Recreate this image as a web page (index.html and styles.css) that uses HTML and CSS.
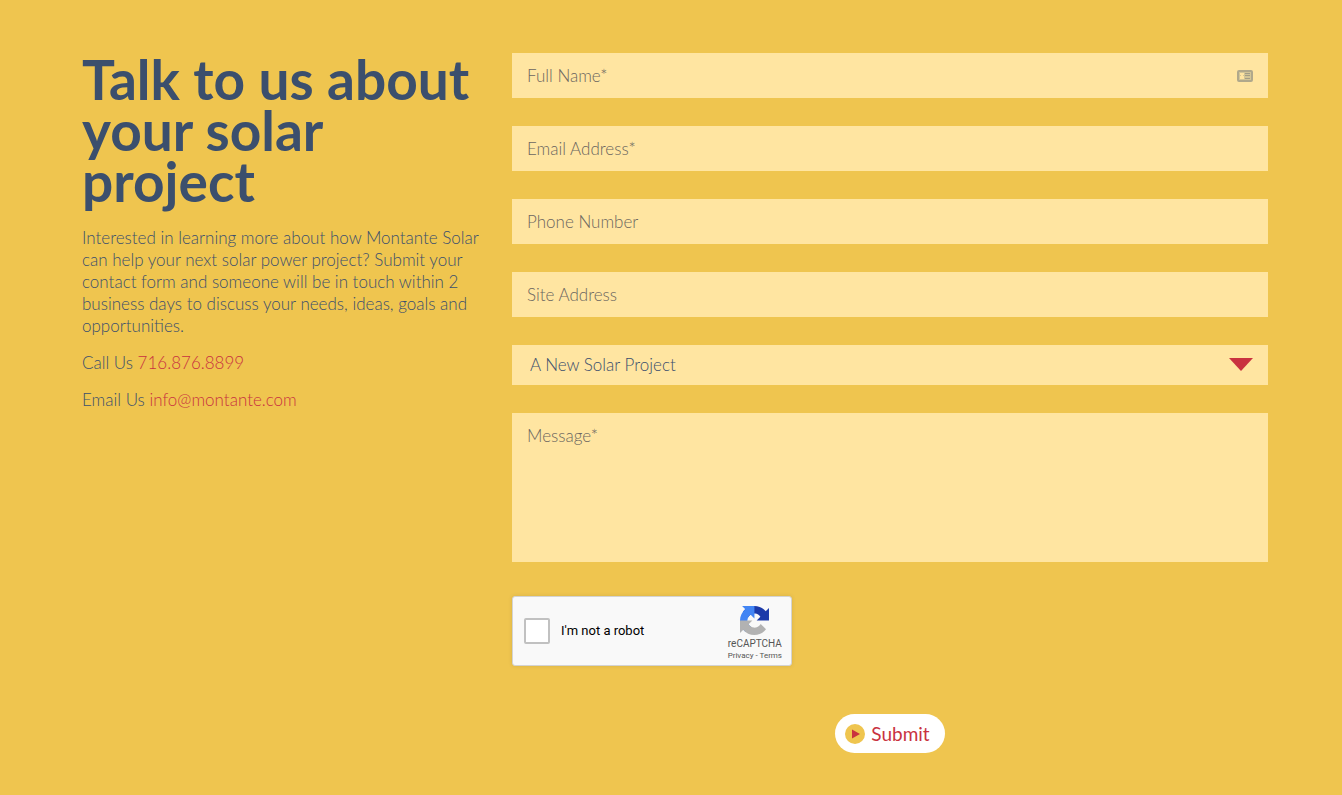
FILE: index.html
```
<!DOCTYPE html>
<html lang="en">
  <head>
    <meta charset="UTF-8" />
    <meta name="viewport" content="width=device-width, initial-scale=1.0" />
    <title>Contact Montante Solar</title>
    <link rel="stylesheet" href="styles.css">
  </head>
  <body>
    <main class="contact">
      <section class="intro">
        <h1>Talk to us about your solar project</h1>
        <p>
          Interested in learning more about how Montante Solar can help your
          next solar power project? Submit your contact form and someone will
          be in touch within 2 business days to discuss your needs, ideas,
          goals and opportunities.
        </p>
        <p>Call Us <a href="tel:7168768899">716.876.8899</a></p>
        <p>Email Us <a href="mailto:info@montante.com">info@montante.com</a></p>
      </section>

      <form class="contact-form">
        <div class="field-wrap">
          <input class="field" type="text" name="name" placeholder="Full Name*" aria-label="Full Name" />
          <svg class="card-icon" width="16" height="14" viewBox="0 0 16 14" aria-hidden="true">
            <rect x="1" y="2" width="14" height="10" rx="1" fill="#d2c596" stroke="#b0a88b" stroke-width="2" />
            <path d="M3 4h4v2H6v1h1v3H3V7h1V6H3z" fill="#ffe5a1" />
            <path d="M8 4h5v1H8zM8 6h5v1H8zM8 9h5v1H8z" fill="#a39d85" />
          </svg>
        </div>
        <input class="field" type="email" name="email" placeholder="Email Address*" aria-label="Email Address" />
        <input class="field" type="tel" name="phone" placeholder="Phone Number" aria-label="Phone Number" />
        <input class="field" type="text" name="site" placeholder="Site Address" aria-label="Site Address" />
        <div class="field-wrap">
          <select class="field field-select" name="project" aria-label="Project type">
            <option>A New Solar Project</option>
          </select>
          <svg class="arrow-icon" width="24" height="13" viewBox="0 0 24 13" aria-hidden="true">
            <path d="M0 0h24L12 13z" fill="#c9323f" />
          </svg>
        </div>
        <textarea class="field field-message" name="message" placeholder="Message*" aria-label="Message"></textarea>

        <div class="captcha">
          <input type="checkbox" id="robot" />
          <label for="robot">I'm not a robot</label>
          <div class="captcha-brand">
            <svg width="29" height="29" viewBox="0 0 64 64" aria-hidden="true">
              <path d="M64 31.955l-.033-1.370V4.687l-7.160 7.160C50.948 4.674 42.033.093 32.050.093c-10.400 0-19.622 4.960-25.458 12.640l11.736 11.860a15.550 15.550 0 0 1 4.754-5.334c2.050-1.600 4.952-2.906 8.968-2.906.485 0 .860.057 1.135.163 4.976.393 9.288 3.140 11.828 7.124l-8.307 8.307z" fill="#1c3aa9" />
              <path d="M31.862.094l-1.370.033H4.594l7.160 7.160C4.580 13.147 0 22.060 0 32.046c0 10.400 4.960 19.622 12.640 25.458L24.500 45.768a15.550 15.550 0 0 1-5.334-4.754c-1.600-2.050-2.906-4.952-2.906-8.968 0-.485.057-.860.163-1.135.393-4.976 3.140-9.288 7.124-11.828l8.307 8.307z" fill="#4285f4" />
              <path d="M0 32.140l.033 1.370v25.900l7.160-7.160C13.053 59.423 21.967 64 31.953 64c10.400 0 19.622-4.960 25.458-12.640L45.675 39.500a15.550 15.550 0 0 1-4.754 5.334c-2.050 1.600-4.952 2.906-8.968 2.906-.485 0-.860-.057-1.135-.163-4.976-.393-9.288-3.140-11.828-7.124l8.307-8.307z" fill="#b2b2b2" />
            </svg>
            <span class="captcha-name">reCAPTCHA</span>
            <span class="captcha-links"><a href="#">Privacy</a> - <a href="#">Terms</a></span>
          </div>
        </div>

        <button class="submit-button" type="submit">
          <svg width="20" height="20" viewBox="0 0 20 20" aria-hidden="true">
            <circle cx="10" cy="10" r="10" fill="#efc54f" />
            <path d="M7 5.500l8 4.500-8 4.500z" fill="#c9323f" />
          </svg>
          Submit
        </button>
      </form>
    </main>
  </body>
</html>
```

FILE: styles.css
```
* {
  box-sizing: border-box;
}

body {
  margin: 0;
  background-color: #efc54f;
  color: #3b4f6d;
  font-family: "Lato", "Liberation Sans", sans-serif;
  font-size: 17px;
  font-weight: 300;
  line-height: 22px;
}

.contact {
  display: grid;
  grid-template-columns: 400px 1fr;
  gap: 30px;
  padding: 53px 74px 42px 82px;
}

h1 {
  margin: 1px 0 20px;
  font-size: 55px;
  font-weight: 700;
  line-height: 51px;
}

p {
  margin: 0 0 15px;
}

a {
  color: #c9323f;
  text-decoration: none;
}

.contact-form {
  display: flex;
  flex-direction: column;
  gap: 28px;
}

.field-wrap {
  position: relative;
  display: flex;
}

.field {
  width: 100%;
  height: 45px;
  margin: 0;
  padding: 0 15px;
  border: none;
  border-radius: 0;
  background-color: #ffe5a1;
  color: #3b4f6d;
  font: inherit;
}

.field::placeholder {
  color: #6b6560;
  opacity: 1;
}

.field-select {
  height: 40px;
  padding: 0 18px;
  appearance: none;
}

.field-message {
  display: block;
  height: 149px;
  padding: 12px 15px;
  resize: none;
}

.card-icon {
  position: absolute;
  top: 16px;
  right: 15px;
}

.arrow-icon {
  position: absolute;
  top: 13px;
  right: 15px;
}

.captcha {
  display: flex;
  align-items: center;
  width: 280px;
  height: 70px;
  margin-top: 6px;
  padding: 0 9px 0 11px;
  border: 1px solid #d3d3d3;
  border-radius: 3px;
  background-color: #f9f9f9;
  box-shadow: 0 0 4px rgba(0, 0, 0, 0.1);
  color: #000;
  font-family: Roboto, "Liberation Sans", sans-serif;
  font-weight: 400;
}

.captcha input {
  width: 26px;
  height: 26px;
  margin: 0 11px 0 0;
  border: 2px solid #c1c1c1;
  border-radius: 2px;
  background-color: #fff;
  appearance: none;
}

.captcha input:checked {
  background-color: #4285f4;
}

.captcha label {
  font-size: 13px;
}

.captcha-brand {
  display: flex;
  flex-direction: column;
  align-items: center;
  margin-left: auto;
  padding-top: 5px;
  color: #555;
}

.captcha-name {
  margin-top: 2px;
  font-size: 10px;
  line-height: 14px;
}

.captcha-links {
  font-size: 8px;
  line-height: 10px;
}

.captcha-links a {
  color: inherit;
}

.submit-button {
  display: flex;
  align-items: center;
  align-self: center;
  gap: 6px;
  height: 39px;
  margin-top: 20px;
  padding: 0 15px 0 10px;
  border: none;
  border-radius: 20px;
  background-color: #fff;
  color: #c9323f;
  font-family: inherit;
  font-size: 19px;
  font-weight: 400;
  cursor: pointer;
}
```
